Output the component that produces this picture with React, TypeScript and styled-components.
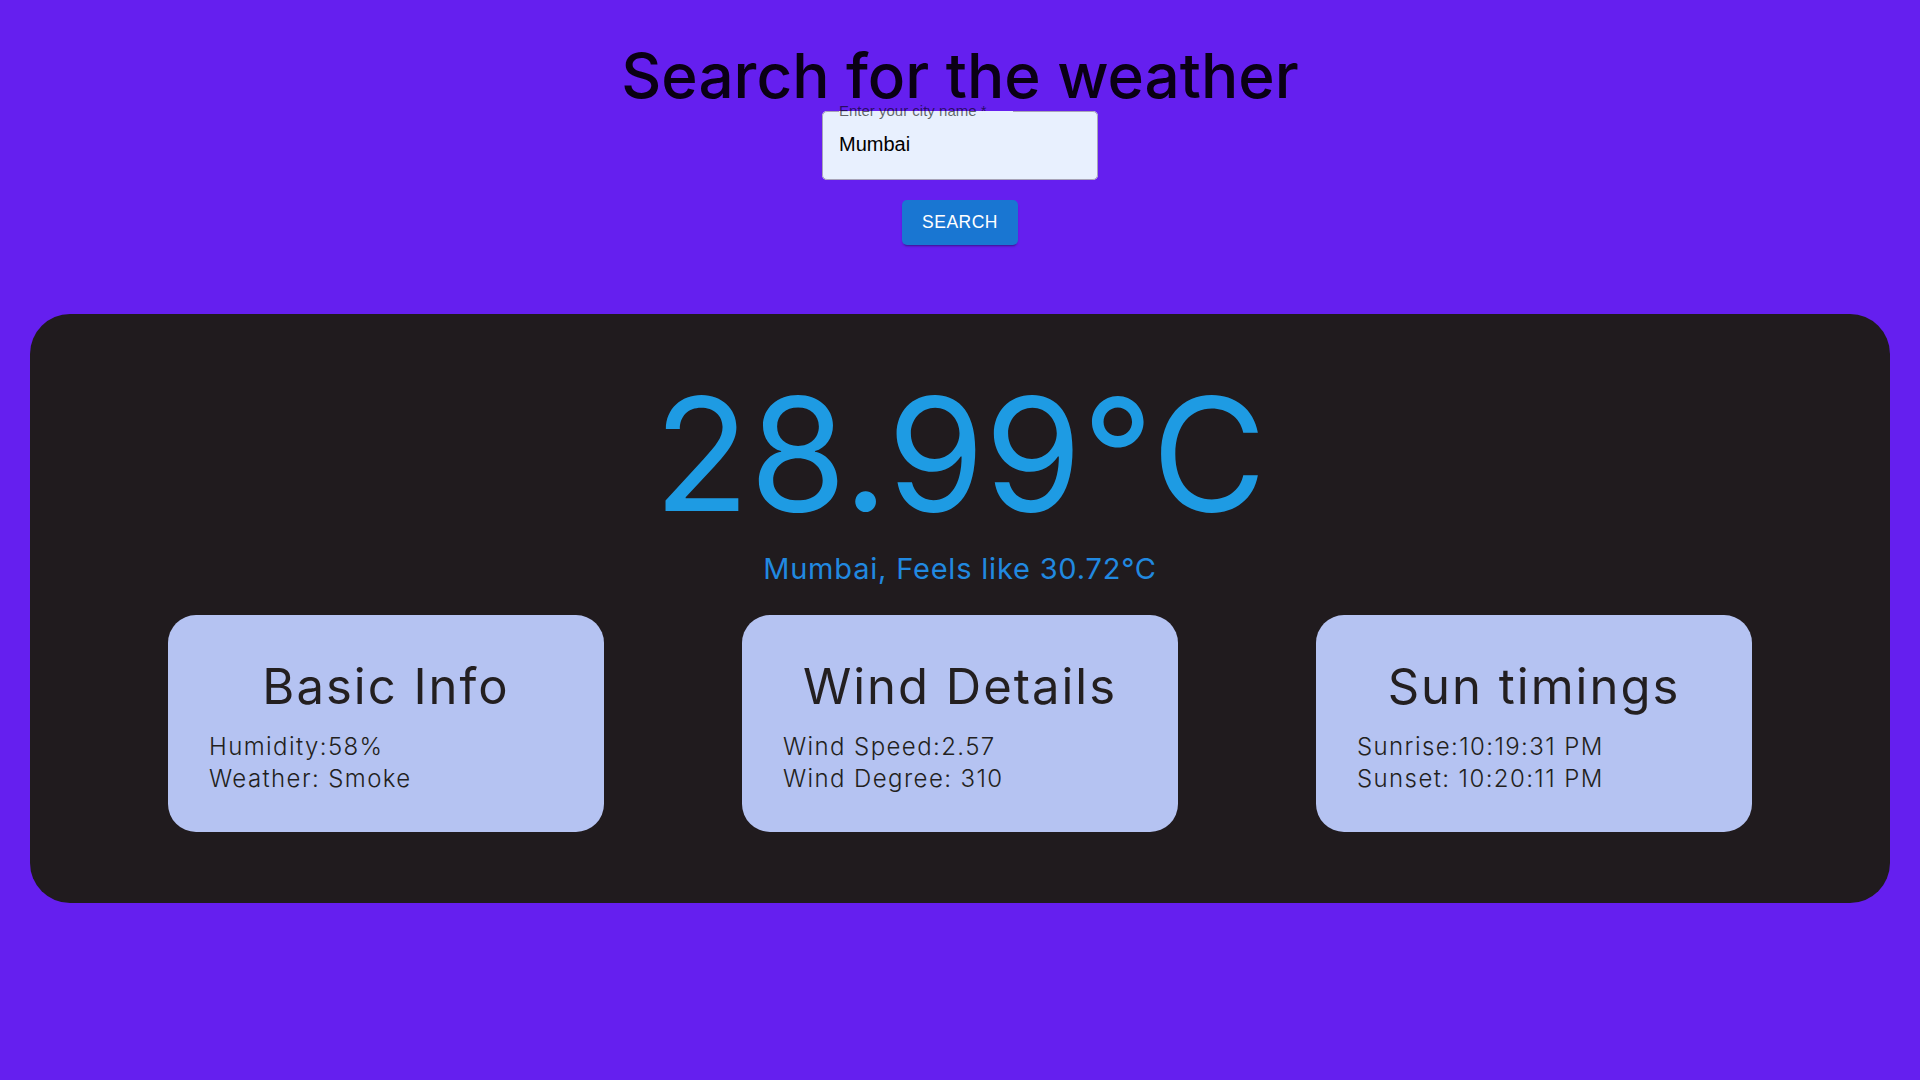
import React from 'react'
import styled, { createGlobalStyle } from 'styled-components'

const GlobalStyle = createGlobalStyle`
  * { box-sizing: border-box; }
  body {
    margin: 0;
    background: #651fef;
    font-family: Inter, "Noto Sans", sans-serif;
  }
`

interface InfoProps {
  title: string
  lines: string[]
}

function InfoCard({ title, lines }: InfoProps) {
  return (
    <Card>
      <CardTitle>{title}</CardTitle>
      <CardBody>
        {lines.map((l) => (
          <Line key={l}>{l}</Line>
        ))}
      </CardBody>
    </Card>
  )
}

export default function App() {
  return (
    <>
      <GlobalStyle />
      <Page>
        <Title>Search for the weather</Title>
        <SearchForm onSubmit={(e) => e.preventDefault()}>
          <Field>
            <Legend>Enter your city name *</Legend>
            <CityInput defaultValue="Mumbai" />
          </Field>
          <SearchButton type="submit">Search</SearchButton>
        </SearchForm>

        <Panel>
          <Temp>28.99°C</Temp>
          <Feels>Mumbai, Feels like 30.72°C</Feels>
          <CardRow>
            <InfoCard title="Basic Info" lines={['Humidity:58%', 'Weather: Smoke']} />
            <InfoCard title="Wind Details" lines={['Wind Speed:2.57', 'Wind Degree: 310']} />
            <InfoCard title="Sun timings" lines={['Sunrise:10:19:31 PM', 'Sunset: 10:20:11 PM']} />
          </CardRow>
        </Panel>
      </Page>
    </>
  )
}

const Page = styled.div`
  min-height: 100vh;
  display: flex;
  flex-direction: column;
  align-items: center;
  padding: 51px 30px 0 30px;
`

const Title = styled.h1`
  margin: 0 0 2px;
  font-size: 62px;
  font-weight: 500;
  line-height: 50px;
  color: #0a0014;
`

const SearchForm = styled.form`
  display: flex;
  flex-direction: column;
  align-items: center;
  gap: 20px;
`

const Field = styled.fieldset`
  margin: 0;
  width: 276px;
  height: 77px;
  padding: 0 16px;
  border: 1px solid #a7a3b8;
  border-radius: 5px;
  background: #e8f0fe;
`

const Legend = styled.legend`
  padding: 0 26px 0 0;
  font-family: "Liberation Sans", Arial, sans-serif;
  font-size: 15px;
  color: rgba(0, 0, 0, 0.6);
  line-height: 16px;
`

const CityInput = styled.input`
  display: block;
  width: 100%;
  border: none;
  outline: none;
  background: transparent;
  padding: 14px 0 0 0;
  font-family: "Liberation Sans", Arial, sans-serif;
  font-size: 20px;
  color: #000;
`

const SearchButton = styled.button`
  width: 116px;
  height: 45px;
  border: none;
  border-radius: 5px;
  background: #1976d2;
  color: #fff;
  font-family: "Liberation Sans", Arial, sans-serif;
  font-size: 17.5px;
  font-weight: 500;
  letter-spacing: 0.5px;
  text-transform: uppercase;
  box-shadow: 0 3px 1px -2px rgba(0, 0, 0, 0.2), 0 2px 2px rgba(0, 0, 0, 0.14);
  cursor: pointer;
`

const Panel = styled.section`
  align-self: stretch;
  margin-top: 69px;
  background: #201b1e;
  border-radius: 40px;
  padding: 60px 0 71px;
  display: flex;
  flex-direction: column;
  align-items: center;
`

const Temp = styled.div`
  font-size: 157px;
  font-weight: 400;
  line-height: 160px;
  color: #1e9be3;
`

const Feels = styled.div`
  margin-top: 17px;
  font-size: 29px;
  font-weight: 400;
  letter-spacing: 0.8px;
  color: #2189e0;
`

const CardRow = styled.div`
  align-self: stretch;
  margin-top: 29px;
  display: flex;
  justify-content: space-evenly;
`

const Card = styled.div`
  width: 436px;
  height: 217px;
  background: #b5c3f2;
  border-radius: 28px;
  padding: 42px 41px 0;
  color: #231f20;
`

const CardTitle = styled.h2`
  margin: 0;
  text-align: center;
  font-size: 49px;
  font-weight: 400;
  letter-spacing: 2px;
  line-height: 60px;
`

const CardBody = styled.div`
  margin-top: 14px;
`

const Line = styled.div`
  font-size: 24px;
  font-weight: 300;
  letter-spacing: 1.4px;
  line-height: 32px;
`
